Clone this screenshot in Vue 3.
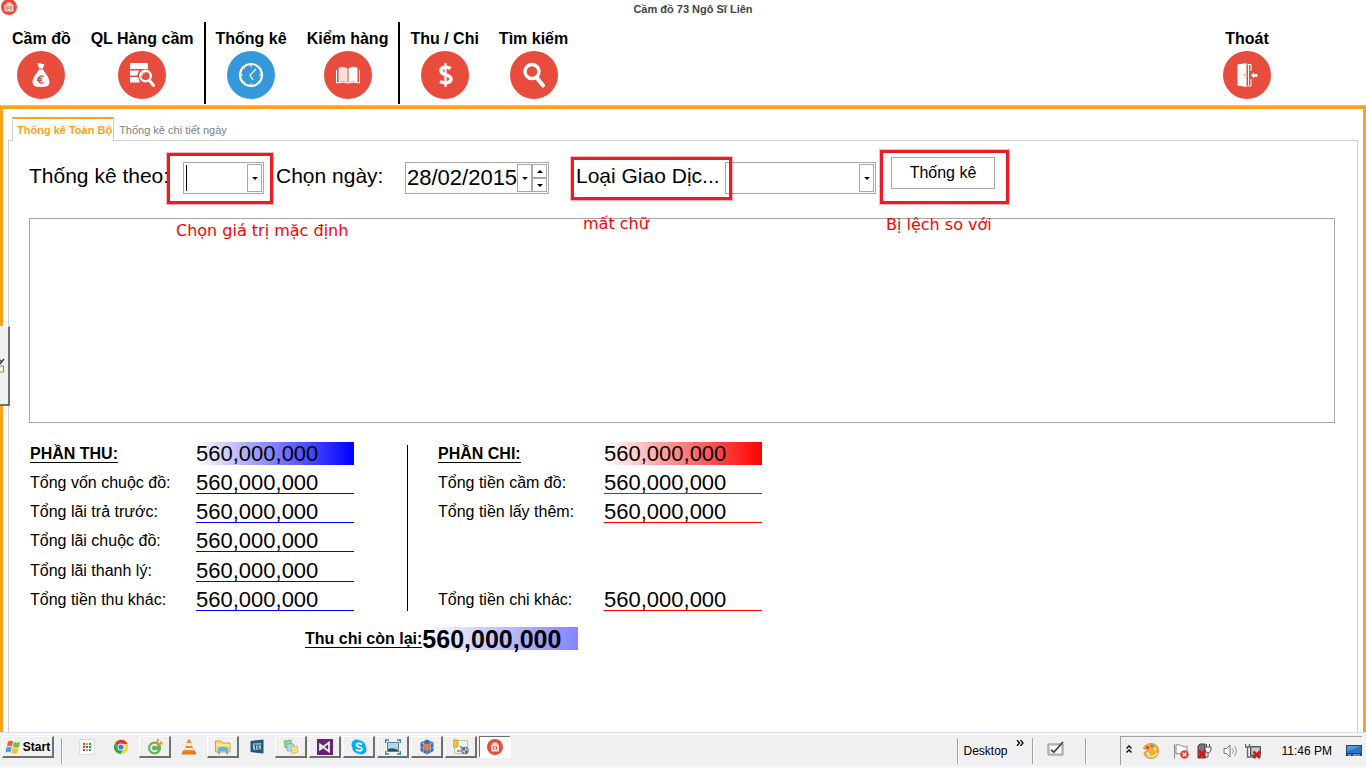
<script setup>
import { ref } from 'vue'

const menu = [
  { label: 'Cầm đồ', icon: 'bag' },
  { label: 'QL Hàng cầm', icon: 'list', divider: true },
  { label: 'Thống kê', icon: 'clock', active: true },
  { label: 'Kiểm hàng', icon: 'book', divider: true },
  { label: 'Thu / Chi', icon: 'dollar' },
  { label: 'Tìm kiếm', icon: 'search' },
  { label: 'Thoát', icon: 'exit', last: true },
]

const amount = '560,000,000'
const income = [
  { label: 'PHẦN THU:', row: 'r1', head: true },
  { label: 'Tổng vốn chuộc đồ:', row: 'r2' },
  { label: 'Tổng lãi trả trước:', row: 'r3' },
  { label: 'Tổng lãi chuộc đồ:', row: 'r4' },
  { label: 'Tổng lãi thanh lý:', row: 'r5' },
  { label: 'Tổng tiền thu khác:', row: 'r6' },
]
const expense = [
  { label: 'PHẦN CHI:', row: 'r1', head: true },
  { label: 'Tổng tiền cầm đồ:', row: 'r2' },
  { label: 'Tổng tiền lấy thêm:', row: 'r3' },
  { label: 'Tổng tiền chi khác:', row: 'r6' },
]

const date = ref('28/02/2015')

const tasks = [
  { icon: 'apps' },
  { icon: 'chrome' },
  { icon: 'coccoc', open: true },
  { icon: 'vlc' },
  { icon: 'folder', open: true },
  { icon: 'tc' },
  { icon: 'notes', open: true },
  { icon: 'vs', open: true },
  { icon: 'skype', open: true },
  { icon: 'picture', open: true },
  { icon: 'cube', open: true },
  { icon: 'tools', open: true },
  { icon: 'pawn', open: true, active: true },
]
</script>

<template>
  <div class="window">
    <header class="caption">
      <svg class="caption-icon" viewBox="0 0 18 18" aria-hidden="true">
        <circle cx="9" cy="7" r="8" fill="#e74c3c" />
        <path d="M5 5h8v6H5zM7 5V3h4v2" fill="#f8d4cf" stroke="#f8d4cf" />
        <path d="M7 6v4M11 6v4M9 6v1M9 8v1" stroke="#e74c3c" fill="none" />
      </svg>
      <h1>Cầm đồ 73 Ngô Sĩ Liên</h1>
    </header>

    <nav class="toolbar">
      <template v-for="m in menu" :key="m.icon">
        <button type="button" class="tool" :class="{ last: m.last }">
          <span>{{ m.label }}</span>
          <svg viewBox="0 0 48 48" width="48" height="48" aria-hidden="true">
            <circle cx="24" cy="24" r="24" :fill="m.active ? '#3498db' : '#e74c3c'" />
            <g v-if="m.icon === 'bag'">
              <path d="M20.500 12.500q1.500-1 3.500 0t3.500 0l-1.500 5h-4z" fill="#fff" />
              <path d="M22 18.500h4c1 2.500 6.500 7.500 6.500 12.500 0 4-2.500 5-8.500 5s-8.500-1-8.500-5c0-5 5.500-10 6.500-12.500z" fill="#fff" />
              <path d="M27 25.500c-3-1.500-5.500 0-5.500 3s2.500 4.500 5.500 3M20 27.500h5M20 29.500h5" fill="none" stroke="#e74c3c" stroke-width="1.300" />
            </g>
            <g v-else-if="m.icon === 'list'">
              <path d="M12 12h18v6H12zM12 19.500h9l-2 5h-7zM12 26h8l2 5.500H12z" fill="#fff" />
              <circle cx="27.500" cy="25" r="5.300" fill="#e74c3c" stroke="#fff" stroke-width="2.400" />
              <path d="M24 25a3.500 3.500 0 0 1 3.500-3.500" fill="none" stroke="#fff" stroke-width=".8" />
              <path d="M31.500 29.500l4 5" stroke="#fff" stroke-width="3" stroke-linecap="round" />
            </g>
            <g v-else-if="m.icon === 'clock'" fill="none" stroke="#fff">
              <circle cx="24" cy="24" r="11" stroke-width="2.200" />
              <path d="M24 14v2M24 32v2M14 24h2M32 24h2M17 17l1 1M30 30l1 1M17 31l1-1" stroke-width="1" />
              <path d="M29 18l-6 6 3 5" stroke-width="1.300" />
            </g>
            <g v-else-if="m.icon === 'book'">
              <path d="M14.500 17q4.500-2.500 9 .5v14q-4.500-2-9 0z" fill="#fbdfdb" />
              <path d="M33.500 17q-4.500-2.500-9 .5v14q4.500-2 9 0z" fill="#fff" />
              <path d="M12.500 19v13q6-1.500 11.500 0 5.500-1.500 11.500 0V19" fill="none" stroke="#fff" stroke-width="1" />
            </g>
            <g v-else-if="m.icon === 'dollar'" fill="none" stroke="#fff">
              <path d="M29.500 17.500c-2-1.500-9.500-2.500-9.500 2.200 0 5 10 3.500 10 8.300 0 4.500-7 4.500-11 2.500" stroke-width="3.500" />
              <path d="M24.500 12v24" stroke-width="2.200" />
            </g>
            <g v-else-if="m.icon === 'search'" fill="none" stroke="#fff">
              <circle cx="22" cy="20.500" r="7" stroke-width="3.400" />
              <path d="M27 27l6 7.500" stroke-width="4" stroke-linecap="round" />
            </g>
            <g v-else>
              <path d="M14.500 13.500l9-1.500v24l-9-1.500z" fill="#fff" />
              <path d="M24.500 13.500h3.500v6.500M28 28v7h-3.500M25.500 14v20" fill="none" stroke="#fff" stroke-width="1" />
              <path d="M28 24.300l3-3v1.700h3.500v2.700H31v1.700z" fill="#fff" />
              <circle cx="21.500" cy="24" r=".8" fill="#e74c3c" />
            </g>
          </svg>
        </button>
        <span v-if="m.divider" class="divider"></span>
      </template>
    </nav>

    <main class="frame">
      <div class="tabs" role="tablist">
        <button type="button" role="tab" aria-selected="true" class="tab selected">Thống kê Toàn Bộ</button>
        <button type="button" role="tab" aria-selected="false" class="tab">Thống kê chi tiết ngày</button>
      </div>

      <section class="page">
        <form class="filters" @submit.prevent>
          <label for="by" class="lbl by">Thống kê theo:</label>
          <div class="field combo-a">
            <select id="by"><option></option></select>
            <span class="caret"></span>
            <span class="drop"></span>
            <span class="mark mark-a"></span>
            <span class="remark remark-a">Chọn giá trị mặc định</span>
          </div>
          <label for="day" class="lbl day">Chọn ngày:</label>
          <div class="field date">
            <input id="day" v-model="date" type="text">
            <button type="button" class="drop" aria-label="Lịch"></button>
            <div class="spin">
              <button type="button" class="up" aria-label="Tăng"></button>
              <button type="button" class="down" aria-label="Giảm"></button>
            </div>
          </div>
          <div class="kind">
            <label for="kind" class="lbl">Loại Giao Dịc...</label>
            <span class="mark mark-b"></span>
            <span class="remark remark-b">mất chữ</span>
          </div>
          <div class="field combo-b">
            <select id="kind"><option></option></select>
            <span class="drop"></span>
          </div>
          <div class="run">
            <button type="submit">Thống kê</button>
            <span class="mark mark-c"></span>
            <span class="remark remark-c">Bị lệch so với</span>
          </div>
        </form>

        <div class="results"></div>

        <div class="summary">
          <div class="ledger income">
            <template v-for="r in income" :key="r.label">
              <span class="name" :class="[r.row, { head: r.head }]"><span>{{ r.label }}</span></span>
              <span class="value" :class="[r.row, { total: r.head }]">{{ amount }}</span>
            </template>
          </div>
          <div class="rule"></div>
          <div class="ledger expense">
            <template v-for="r in expense" :key="r.label">
              <span class="name" :class="[r.row, { head: r.head }]"><span>{{ r.label }}</span></span>
              <span class="value" :class="[r.row, { total: r.head }]">{{ amount }}</span>
            </template>
          </div>
        </div>
        <div class="balance">
          <span class="balance-name">Thu chi còn lại:</span>
          <strong>{{ amount }}</strong>
        </div>
      </section>

      <button type="button" class="side" aria-label="Bảng bên">
        <svg viewBox="0 0 6 16" width="6" height="16" aria-hidden="true">
          <path d="M-1 8h4.500v6H-1" fill="#fffbd0" stroke="#8a8a6a" />
          <path d="M0 6l4-5M0 2l2 2" stroke="#345" stroke-width="1.500" />
        </svg>
      </button>
    </main>

    <footer class="taskbar">
      <button type="button" class="start">
        <svg viewBox="0 0 16 16" width="16" height="16" aria-hidden="true">
          <path d="M3 2.500q3-1.500 5 0L7 7.500q-2-1.500-5 0z" fill="#e8602c" />
          <path d="M9 3q3 1.500 6 0l-1 5q-3 1.500-6 0z" fill="#7cba3d" />
          <path d="M1.500 8.500q3-1.500 5 0l-1 5q-2-1.500-5 0z" fill="#4a9be0" />
          <path d="M7.500 9q3 1.500 6 0l-1 5q-3 1.500-6 0z" fill="#f8c22d" />
        </svg>
        Start
      </button>
      <span class="grip first"></span>
      <div class="tasks">
        <button v-for="t in tasks" :key="t.icon" type="button" class="task" :class="{ open: t.open, active: t.active }" :aria-label="t.icon">
          <svg viewBox="0 0 16 16" width="16" height="16" aria-hidden="true">
            <g v-if="t.icon === 'apps'">
              <rect x=".5" y=".5" width="15" height="15" fill="#fafafa" stroke="#ddd" />
              <path d="M4 5h2M4 8h2" stroke="#e33" stroke-width="2" />
              <path d="M7 5h2M7 11h2" stroke="#e8a020" stroke-width="2" />
              <path d="M10 5h2M10 8h2" stroke="#2a9d4a" stroke-width="2" />
              <path d="M7 8h2M10 11h2" stroke="#37c" stroke-width="2" />
              <path d="M4 11h2" stroke="#b36" stroke-width="2" />
            </g>
            <g v-else-if="t.icon === 'chrome'">
              <circle cx="8" cy="8" r="7" fill="#fdd23a" />
              <path d="M8 8L2 4.400A7 7 0 0 1 14.500 5H8z" fill="#e23b2e" />
              <path d="M8 8L2 4.400A7 7 0 0 0 7.500 15l3-5z" fill="#2fa84f" />
              <circle cx="8" cy="8" r="3.500" fill="#fff" />
              <circle cx="8" cy="8" r="2.600" fill="#3e7fe0" />
            </g>
            <g v-else-if="t.icon === 'coccoc'">
              <circle cx="7.500" cy="9" r="6.500" fill="#5cb84f" />
              <path d="M10 7a3.300 3.300 0 1 0 0 4" fill="none" stroke="#fff" stroke-width="1.800" />
              <path d="M10 6l1-6M11 7l4-4" stroke="#f08a2a" stroke-width="1.800" />
            </g>
            <g v-else-if="t.icon === 'vlc'">
              <path d="M2 11.500h12l1.500 4H.5z" fill="#e77817" />
              <path d="M7 .5h2l4 12q-5 2-10 0z" fill="#f08a1d" />
              <path d="M6 4h4l1 3H5zM4.500 9h7l.8 2H3.700z" fill="#f4f4f4" />
            </g>
            <g v-else-if="t.icon === 'folder'">
              <path d="M.5 2h6l1.500 2h7v9H.5z" fill="#f4d675" stroke="#c9a440" />
              <path d="M1 6h14" stroke="#fff5c0" />
              <path d="M4 15.500V9.500q4-1.500 8 0v6M5 11h6" fill="none" stroke="#52b4e0" stroke-width="1.800" />
            </g>
            <g v-else-if="t.icon === 'tc'">
              <path d="M1.500 2l13-1.500v14L1.500 13z" fill="#2d5380" />
              <path d="M4 4.500l8-.5v7l-8-.5z" fill="#8fd0e8" />
              <path d="M5 6h3M6.500 6v4M11.500 6H9v4h2.500" fill="none" stroke="#345c20" />
            </g>
            <g v-else-if="t.icon === 'notes'">
              <path d="M1 2l7-1 1 7-7 1z" fill="#93d388" stroke="#5fa055" stroke-width=".6" />
              <path d="M4 5h7v7H4z" fill="#b2d9f2" stroke="#6b9bc0" stroke-width=".6" />
              <path d="M8 8l6-1 1 6-6 2z" fill="#f7e480" stroke="#c3a73c" stroke-width=".6" />
            </g>
            <g v-else-if="t.icon === 'vs'">
              <path d="M0 0h16v16H0z" fill="#68217a" />
              <path d="M3 5.500v5l9-7v9z" fill="none" stroke="#fff" stroke-width="1.600" />
            </g>
            <g v-else-if="t.icon === 'skype'">
              <circle cx="5.500" cy="5.500" r="5" fill="#00aff0" />
              <circle cx="10.500" cy="10.500" r="5" fill="#00aff0" />
              <circle cx="8" cy="8" r="6.800" fill="#00aff0" />
              <path d="M11 5.500C9.500 4 5.500 3.800 5.500 6c0 2.500 5.500 1.500 5.500 4 0 2.300-4.500 2-6 .5" fill="none" stroke="#fff" stroke-width="1.800" />
            </g>
            <g v-else-if="t.icon === 'picture'">
              <path d="M.7 4V1H4M12 1h3.300v3M15.300 12v3H12M4 15H.7v-3" fill="none" stroke="#3a84b8" stroke-width="1.400" />
              <path d="M2.500 3.500h11v9h-11z" fill="#a9d8f5" stroke="#778" />
              <path d="M3 10q5-2 10 1v1H3z" fill="#334f50" />
            </g>
            <g v-else-if="t.icon === 'cube'">
              <path d="M8 .5l6.500 3v8.500L8 15.500 1.500 12V3.500z" fill="#4169ad" />
              <path d="M1.500 3.500L8 6.500l6.500-3M8 6.500v9M1.500 8L8 11.200 14.500 8M4.700 2v12M11.300 2v12" fill="none" stroke="#a9c3ea" stroke-width=".7" />
              <path d="M8 4.500l3 1.500v3.500L8 11 5 9.500V6z" fill="#ed7a32" />
            </g>
            <g v-else-if="t.icon === 'tools'">
              <path d="M1.500 1.500h13v13h-13z" fill="none" stroke="#64b33c" stroke-dasharray="1 1" />
              <path d="M0 1.500q2.500-2 5 0v6q-2.500 2-5 0z" fill="#edc13d" stroke="#b18920" stroke-width=".6" />
              <path d="M7 7l4 4M4 12h4" stroke="#888" stroke-width="1.500" />
              <circle cx="12" cy="11.500" r="3.700" fill="#3c7bc0" />
              <path d="M12 8v3.500h3.500M12 15v-3.500H8.500" fill="#f3cf45" />
            </g>
            <g v-else>
              <circle cx="8" cy="8" r="8" fill="#e74c3c" />
              <path d="M4.500 6h7v6h-7zM6 6V4h4v2" fill="#fae0dc" stroke="#fae0dc" />
              <path d="M6.500 7.500v3M9.500 7.500v3M8 7v1M8 9.500v1" stroke="#e74c3c" />
            </g>
          </svg>
        </button>
      </div>

      <div class="deskband">
        <span class="grip"></span>
        <span class="desk-name">Desktop</span>
        <button type="button" class="more" aria-label="Thêm">
          <svg viewBox="0 0 8 6" width="8" height="6" aria-hidden="true"><path d="M1 0l2.500 3L1 6M4.500 0L7 3 4.500 6" fill="none" stroke="#000" stroke-width="1.300" /></svg>
        </button>
        <span class="grip"></span>
        <button type="button" class="pen" aria-label="Bút">
          <svg viewBox="0 0 18 16" width="18" height="16" aria-hidden="true">
            <path d="M1 3h15v11H1z" fill="#c9d6cd" stroke="#88938c" />
            <path d="M3 5h11v7H3z" fill="#fff" />
            <path d="M4 9l3 2 9-10" fill="none" stroke="#3c4a3e" stroke-width="1.800" />
          </svg>
        </button>
        <span class="grip"></span>
      </div>

      <div class="tray">
        <svg class="chev" viewBox="0 0 6 9" width="6" height="9" aria-hidden="true"><path d="M.5 3.500L3 1l2.500 2.500M.5 7.500L3 5l2.500 2.500" fill="none" stroke="#000" stroke-width="1.300" /></svg>
        <svg class="t1" viewBox="0 0 16 16" width="16" height="16" aria-hidden="true">
          <path d="M8 .5c5 0 7.500 3 7.500 7.500S13 15.500 8 15.500 1 12 1 10c0-2 4-1 3-3S0 7 .5 5 4 .5 8 .5z" fill="#f4ae32" stroke="#c77b1a" stroke-width=".6" />
          <circle cx="4.500" cy="4.500" r="1.600" fill="#e33" /><circle cx="9" cy="3" r="1.500" fill="#39c" /><circle cx="5" cy="11" r="1.400" fill="#fff" /><circle cx="12" cy="6" r="1.500" fill="#fae37d" /><path d="M5 13q6 2 9-3" stroke="#fff0b0" stroke-width="1.500" fill="none" />
        </svg>
        <svg class="t2" viewBox="0 0 16 16" width="16" height="16" aria-hidden="true">
          <path d="M1.500 1v14.500M3 2q3-1 6 1t5 0v8q-3 1-6 0t-5 0z" fill="#fff" stroke="#888" />
          <circle cx="11.500" cy="11.500" r="4.300" fill="#e04040" /><path d="M9.700 9.700l3.600 3.600M13.300 9.700l-3.600 3.600" stroke="#fff" stroke-width="1.300" />
        </svg>
        <svg class="t3" viewBox="0 0 16 16" width="16" height="16" aria-hidden="true">
          <path d="M2 3l2-2h5v14H2z" fill="#777" stroke="#444" /><path d="M9 4h6v3q-1 3-3 3t-3-3zM10.500 1v3M13.500 1v3M12 10v4H8" fill="#fff" stroke="#555" />
          <path d="M2.500 7.500l7 7M9.500 7.500l-7 7" stroke="#d3141b" stroke-width="2.500" />
        </svg>
        <svg class="t4" viewBox="0 0 16 16" width="16" height="16" aria-hidden="true">
          <path d="M2 5.500h2.500L8 2v12l-3.500-3.500H2z" fill="#fff" stroke="#777" /><path d="M10.500 5.500q2 2.500 0 5M12.500 3q3.500 5 0 10" fill="none" stroke="#999" />
        </svg>
        <svg class="t5" viewBox="0 0 16 16" width="16" height="16" aria-hidden="true">
          <path d="M5.500 3.500h10v9h-10z" fill="#999" stroke="#555" /><path d="M7 5h7v5.500H7z" fill="#ccc" />
          <path d="M.5 1v3h4V1M2.500 4v10H9" fill="none" stroke="#666" stroke-width="1.400" />
          <path d="M8.500 8.500l6.500 6.500M15 8.500L8.500 15" stroke="#d3141b" stroke-width="2.500" />
        </svg>
        <time>11:46 PM</time>
        <svg class="t6" viewBox="0 0 16 12" width="16" height="12" aria-hidden="true">
          <path d="M0 0h16v11H0z" fill="#26446e" /><path d="M1 1h14v7H1z" fill="#2c72c9" /><path d="M1 1h14L1 6z" fill="#4e97e2" /><path d="M2 10h3M7 10h7" stroke="#b7d0e8" />
        </svg>
      </div>
    </footer>
  </div>
</template>

<style>
body {
  background: #fff;
}
</style>

<style scoped>
* {
  box-sizing: border-box;
}
.window {
  min-height: 100vh;
  display: flex;
  flex-direction: column;
  font-family: "Liberation Sans", Arial, sans-serif;
  color: #000;
  background: #fff;
}
button {
  font: inherit;
  color: inherit;
  background: none;
  border: 0;
  padding: 0;
}
svg {
  display: block;
  flex: none;
}

/* caption and main menu */
.caption {
  display: flex;
  height: 18px;
}
.caption-icon {
  width: 18px;
  height: 18px;
}
.caption h1 {
  flex: 1;
  margin: 0;
  padding-left: 2px;
  font-size: 11px;
  line-height: 18px;
  text-align: center;
  color: #444;
}
.toolbar {
  display: flex;
  align-items: flex-start;
  padding: 4px 0 1px 2px;
}
.tool {
  display: flex;
  flex-direction: column;
  align-items: center;
  padding: 8px 10px 4px;
  font-size: 16px;
  font-weight: bold;
  white-space: nowrap;
}
.tool span {
  line-height: 18px;
  margin-bottom: 3px;
}
.tool.last {
  margin-left: auto;
  margin-right: 85px;
}
.divider {
  width: 2px;
  height: 82px;
  background: #000;
}

/* framed work area */
.frame {
  flex: 1;
  position: relative;
  display: flex;
  flex-direction: column;
  border: 3px solid #ffa21a;
  border-bottom: 0;
  box-shadow: 0 -1px #b5c4dc;
  padding: 8px 5px 0;
  margin-top: 1px;
}
.tabs {
  display: flex;
  padding-left: 4px;
  font-size: 11px;
}
.tab {
  height: 23px;
  padding: 3px 5px 0;
  color: #808080;
  white-space: nowrap;
}
.tab.selected {
  height: 24px;
  padding: 0 1px 0 4px;
  color: #ffa21a;
  font-weight: bold;
  background: #fff;
  border: 1px solid #d0d0d0;
  border-top: 2px solid #ffa21a;
  border-bottom: 0;
  margin-bottom: -1px;
  position: relative;
}
.page {
  flex: 1;
  border: 1px solid #d0d0d0;
  border-bottom: 0;
  padding: 21px 22px 0 20px;
  min-width: 0;
}

/* filter row */
.filters {
  display: flex;
  height: 32px;
  margin-bottom: 24px;
  font-size: 22px;
}
.lbl {
  font-size: 21px;
  line-height: 28px;
  white-space: nowrap;
}
.by {
  width: 154px;
}
.day {
  width: 129px;
}
.field {
  position: relative;
  display: flex;
  border: 1px solid #a9a9a9;
  padding: 1px;
}
.combo-a {
  width: 81px;
  margin-right: 12px;
}
.combo-b {
  width: 151px;
}
.date {
  width: 144px;
  margin-right: 27px;
}
.field select,
.field input {
  flex: 1;
  min-width: 0;
  appearance: none;
  border: 0;
  outline: 0;
  padding: 0;
  background: transparent;
  font: inherit;
  color: inherit;
}
.caret {
  position: absolute;
  left: 2px;
  top: 2px;
  width: 1px;
  height: 26px;
  background: #000;
}
.drop {
  width: 15px;
  border: 1px solid #a9a9a9;
  display: grid;
  place-items: center;
}
.drop::after,
.spin button::after {
  content: "";
  display: block;
  border: 3px solid transparent;
  border-top-color: #000;
  border-bottom-width: 0;
}
.spin {
  width: 15px;
  display: grid;
  grid-template-rows: 1fr 1fr;
}
.spin button {
  display: grid;
  place-items: center;
  border: 1px solid #a9a9a9;
}
.spin .up::after {
  border-top-width: 0;
  border-bottom: 3px solid #000;
}
.kind {
  position: relative;
  width: 149px;
}
.run {
  position: relative;
  margin-left: 15px;
  margin-top: -5px;
}
.run button {
  width: 104px;
  height: 32px;
  border: 1px solid #a9a9a9;
  background: #fff;
  font-size: 16px;
}

/* review marks laid over the form */
.mark {
  position: absolute;
  z-index: 2;
  border: 3px solid #ed1c24;
  box-shadow: 0 0 0 1px rgba(237, 28, 36, 0.3);
  pointer-events: none;
}
.mark-a {
  left: -17px;
  top: -10px;
  width: 106px;
  height: 51px;
}
.mark-b {
  left: -5px;
  top: -5px;
  width: 161px;
  height: 43px;
}
.mark-c {
  left: -11px;
  top: -7px;
  width: 129px;
  height: 54px;
}
.remark {
  position: absolute;
  z-index: 2;
  color: #f00;
  font-family: "DejaVu Sans", sans-serif;
  font-size: 16px;
  line-height: 20px;
  white-space: nowrap;
}
.remark-a {
  left: -8px;
  top: 58px;
}
.remark-b {
  left: 7px;
  top: 52px;
}
.remark-c {
  left: -5px;
  top: 58px;
}

.results {
  height: 205px;
  border: 1px solid #a9a9a9;
  margin-bottom: 19px;
}

/* totals */
.summary {
  display: flex;
  padding-left: 1px;
}
.ledger {
  display: grid;
  grid-template-columns: 166px 158px;
  grid-template-rows: 23px 29px 29px 29px 30px 29px;
}
.rule {
  width: 1px;
  background: #000;
  margin: 3px 30px 0 53px;
}
.name {
  grid-column: 1;
  align-self: end;
  font-size: 16px;
  line-height: 22px;
  white-space: nowrap;
}
.head span,
.balance-name {
  font-weight: bold;
  border-bottom: 1px solid #000;
}
.value {
  grid-column: 2;
  align-self: end;
  height: 23px;
  font-size: 22px;
  line-height: 24px;
  border-bottom: 1px solid #00f;
}
.expense .value {
  border-color: #f00;
}
.value.total {
  border: 0;
  background: linear-gradient(90deg, #fff, #00f);
}
.expense .total {
  background: linear-gradient(90deg, #fff, #f00);
}
.r1 { grid-row: 1; }
.r2 { grid-row: 2; }
.r3 { grid-row: 3; }
.r4 { grid-row: 4; }
.r5 { grid-row: 5; }
.r6 { grid-row: 6; }
.balance {
  display: flex;
  padding-left: 276px;
  margin-top: 16px;
}
.balance-name {
  height: 21px;
  font-size: 16px;
  line-height: 24px;
  white-space: nowrap;
}
.balance strong {
  width: 156px;
  height: 23px;
  font-size: 25px;
  line-height: 25px;
  background: linear-gradient(90deg, #fff, #8484ff);
}

/* docked handle on the left edge */
.side {
  position: absolute;
  left: -3px;
  top: 217px;
  width: 10px;
  height: 80px;
  display: flex;
  align-items: center;
  background: #f0f0f0;
  border: 2px solid #6e6e6e;
  border-left: 0;
  border-top: 1px solid #fff;
}

/* task bar */
.taskbar {
  position: relative;
  display: flex;
  align-items: flex-start;
  height: 36px;
  padding: 3px 4px 2px 2px;
  border-top: 1px solid #dcdce2;
  background: linear-gradient(#f4f7fb 2px, #f0f0f0 2px, #f0f0f0 33px, #f4f7fb 33px);
  font-size: 12px;
}
.start,
.task {
  height: 22px;
  display: flex;
  align-items: center;
  justify-content: center;
  border: solid transparent;
  border-width: 1px 2px 2px 1px;
}
.start {
  width: 52px;
  gap: 2px;
  font-weight: bold;
}
.start,
.task.open {
  border-color: #fff #707070 #707070 #fff;
}
.task.active {
  background: #fff;
  border-color: #707070 #fff #fff #707070;
}
.grip {
  width: 2px;
  height: 26px;
  border-left: 1px solid #a0a0a0;
  border-right: 1px solid #fff;
}
.grip.first {
  margin: 2px 8px 0 7px;
}
.tasks {
  display: flex;
  gap: 2px;
}
.task {
  width: 32px;
}
.deskband {
  display: flex;
  align-items: center;
  margin-left: auto;
  height: 29px;
}
.desk-name {
  margin-left: 4px;
}
.more {
  align-self: flex-start;
  margin: 4px 8px 0 8px;
}
.pen {
  margin: 0 20px 4px 13px;
}
.tray {
  display: flex;
  align-items: center;
  height: 29px;
  margin-left: 33px;
  padding-left: 5px;
  border-top: 1px solid #a0a0a0;
  border-left: 1px solid #a0a0a0;
}
.chev { margin: 0 11px 4px 0; }
.t1 { margin-right: 14px; }
.t2 { margin-right: 7px; }
.t3 { margin-right: 10px; }
.t4 { margin-right: 7px; }
.t5 { margin-right: 21px; }
.t6 { margin-left: 14px; }
</style>
